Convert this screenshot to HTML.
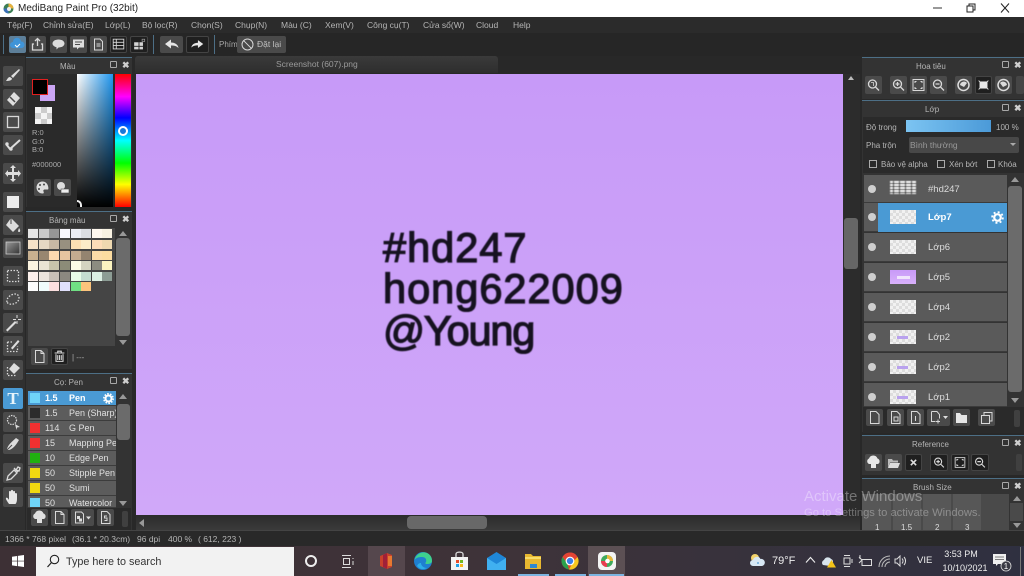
<!DOCTYPE html>
<html><head><meta charset="utf-8"><style>
*{box-sizing:border-box}
html,body{margin:0;padding:0;width:1024px;height:576px;overflow:hidden;background:#2a2a2a;font-family:"Liberation Sans",sans-serif}
.a,.t,.b,.bd,.s,.tl,.ln,.sw{position:absolute}
.t{white-space:nowrap;color:#c4c4c4;font-size:9px;line-height:11px}
.b{background:#4a4a4a;border-radius:2px}
.bd{background:#1f1f1f;border:1px solid #444;border-radius:2px}
.s{background:#333;border-top:1px solid #4d6f86}
.m{top:20px;font-size:8.5px;color:#b5b5b5}
.b svg,.bd svg{position:absolute;left:0;top:0;width:100%;height:100%}
.sw{width:12px;height:12px}
.ln{left:28px;width:88px;height:15px;background:#5c5c5c;border-bottom:1px solid #3c3c3c}
.ln i{position:absolute;left:2px;top:2px;width:10px;height:10px}
.ln span{position:absolute;left:17px;top:2px;font:normal 9px/11px "Liberation Sans",sans-serif;color:#e0e0e0;white-space:nowrap}
.ln b{position:absolute;left:41px;top:2px;font:normal 9px/11px "Liberation Sans",sans-serif;color:#e0e0e0;white-space:nowrap;width:47px;overflow:hidden}
.ly{position:absolute;left:864px;width:143px;height:29px;background:#5a5a5a;border-bottom:1px solid #3b3b3b}
.ly u{position:absolute;left:4px;top:10px;width:8px;height:8px;border-radius:50%;background:#cfcfcf}
.ly em{position:absolute;left:26px;top:7px;width:26px;height:14px;background:#f1f1f1;background-image:linear-gradient(45deg,#ddd 25%,transparent 25%,transparent 75%,#ddd 75%),linear-gradient(45deg,#ddd 25%,transparent 25%,transparent 75%,#ddd 75%);background-size:6px 6px;background-position:0 0,3px 3px}
.ly span{position:absolute;left:64px;top:9px;font-size:9.5px;line-height:11px;color:#dcdcdc;font-style:normal}
.ic{fill:none;stroke:#d8d8d8;stroke-width:1.3}
.pan{font-size:8px;color:#b5b5b5}
.x{position:absolute;color:#cfcfcf;font-size:9px;font-weight:bold;line-height:9px}
.pop{position:absolute;width:7px;height:7px;border:1px solid #a8a8a8;border-radius:1px}
.tb{position:absolute;top:546px;width:37px;height:30px}
.big{position:absolute;left:383px;font-size:41.5px;line-height:44px;color:#161220;-webkit-text-stroke:1.3px #161220;filter:blur(.55px);white-space:nowrap}
.cell{position:absolute;width:9.5px;height:9px}
</style></head><body>

<!-- Title bar -->
<div class="a" style="left:0;top:0;width:1024px;height:17px;background:#fff"></div>
<svg class="a" style="left:2px;top:2px" width="13" height="13" viewBox="0 0 13 13"><circle cx="6.5" cy="6.5" r="5" fill="#3c7f55"/><path d="M6.5 1.5a5 5 0 0 1 5 5h-5z" fill="#e8b23c"/><path d="M1.5 6.5a5 5 0 0 0 5 5v-5z" fill="#3a6fb8"/><circle cx="7" cy="7" r="2" fill="#eee"/></svg>
<div class="t" style="left:18px;top:3px;font-size:10px;color:#222;line-height:12px">MediBang Paint Pro (32bit)</div>
<svg class="a" style="left:930px;top:0" width="94" height="17" viewBox="0 0 94 17"><path d="M3 8h9" stroke="#333" fill="none"/><rect x="37" y="6" width="6" height="6" fill="none" stroke="#222"/><path d="M39 6V4h6v6h-2" fill="none" stroke="#222"/><path d="M71 3.500l8 9M79 3.500l-8 9" stroke="#222" fill="none"/></svg>

<!-- Menu -->
<div class="a" style="left:0;top:17px;width:1024px;height:16px;background:#2b2b2b"></div>
<div class="t m" style="left:7px">Tệp(F)</div>
<div class="t m" style="left:43px">Chỉnh sửa(E)</div>
<div class="t m" style="left:105px">Lớp(L)</div>
<div class="t m" style="left:142px">Bộ lọc(R)</div>
<div class="t m" style="left:191px">Chọn(S)</div>
<div class="t m" style="left:235px">Chụp(N)</div>
<div class="t m" style="left:281px">Màu (C)</div>
<div class="t m" style="left:325px">Xem(V)</div>
<div class="t m" style="left:367px">Công cụ(T)</div>
<div class="t m" style="left:423px">Cửa sổ(W)</div>
<div class="t m" style="left:476px">Cloud</div>
<div class="t m" style="left:513px">Help</div>

<!-- Toolbar -->
<div class="a" style="left:0;top:33px;width:1024px;height:23px;background:#262626"></div>
<div class="a" style="left:3px;top:35px;width:1px;height:19px;background:#4d6f86"></div>
<div class="b" style="left:9px;top:36px;width:17px;height:17px;background:#5d7f99"><svg viewBox="0 0 17 17"><path d="M4 12a3 3 0 0 1 0-6 4 4 0 0 1 8-.5A3.300 3.300 0 0 1 13 12z" fill="#3f94d8"/><path d="M6 9l2 2 3-3" stroke="#fff" fill="none"/></svg></div>
<div class="b" style="left:29px;top:36px;width:17px;height:17px"><svg viewBox="0 0 17 17" class="ic"><path d="M5 8H3.500v6h10V8H12M8.500 10V3M6 5l2.500-2.500L11 5"/></svg></div>
<div class="b" style="left:50px;top:36px;width:17px;height:17px"><svg viewBox="0 0 17 17"><path d="M8.500 3.500c3.500 0 6 1.800 6 4s-2.500 4-6 4l-2 2v-2.300c-2.400-.5-4-2-4-3.700 0-2.200 2.500-4 6-4z" fill="#dedede"/></svg></div>
<div class="b" style="left:70px;top:36px;width:17px;height:17px"><svg viewBox="0 0 17 17"><path d="M3 3.500h11v8H9l-2 2v-2H3z" fill="#dedede"/><path d="M5 6h7M5 8.500h5" stroke="#4a4a4a"/></svg></div>
<div class="b" style="left:90px;top:36px;width:17px;height:17px"><svg viewBox="0 0 17 17" class="ic" style="stroke-width:1"><path d="M4.500 3h5.500l2.500 2.500V14h-8zM6.500 8h4M6.500 10h4"/></svg></div>
<div class="bd" style="left:110px;top:36px;width:17px;height:17px"><svg viewBox="0 0 17 17" class="ic" style="stroke-width:1"><path d="M2.500 2.500h12v11h-12zM2.500 6h12M2.500 9.500h12M6 2.500v11"/></svg></div>
<div class="bd" style="left:130px;top:36px;width:18px;height:17px"><svg viewBox="0 0 17 17"><path d="M3 6h5v4H3zM9 6h4v4H9zM3 11h5v3H3zM9 11h4v3H9z" fill="#d4d4d4"/><path d="M12 2.500h3v2.500h-3z" fill="none" stroke="#aaa" stroke-width=".7"/></svg></div>
<div class="a" style="left:153px;top:35px;width:1px;height:19px;background:#4d6f86"></div>
<div class="b" style="left:160px;top:36px;width:23px;height:17px"><svg viewBox="0 0 23 17"><path d="M5 8l6-4.500V6.500c4 0 7 2 7.500 5.500-2-2-4-2.500-7.500-2.500v3z" fill="#e6e6e6"/></svg></div>
<div class="bd" style="left:186px;top:36px;width:23px;height:17px"><svg viewBox="0 0 23 17"><path d="M18 8l-6-4.500V6.500c-4 0-7 2-7.500 5.500 2-2 4-2.500 7.500-2.500v3z" fill="#e6e6e6"/></svg></div>
<div class="a" style="left:214px;top:35px;width:1px;height:19px;background:#4d6f86"></div>
<div class="t" style="left:219px;top:39px;font-size:8px;color:#a8a8a8">Phím</div>
<div class="b" style="left:237px;top:36px;width:49px;height:17px"><svg viewBox="0 0 49 17" class="ic" style="stroke-width:1"><circle cx="10.500" cy="8.500" r="5.500"/><path d="M6.700 4.700l7.600 7.600"/></svg></div>
<div class="t" style="left:257px;top:39px;font-size:8.5px;color:#c0c0c0">Đặt lại</div>

<!-- Background dark areas -->
<div class="a" style="left:0;top:56px;width:1024px;height:474px;background:#282828"></div>
<div class="a" style="left:0;top:56px;width:25px;height:474px;background:#303030"></div>

<!-- Canvas -->
<div class="a" style="left:135px;top:56px;width:363px;height:17px;background:linear-gradient(#3a3a3a,#2e2e2e);border-radius:3px 3px 0 0"></div>
<div class="t" style="left:276px;top:59px;font-size:8.500px;color:#9a9a9a">Screenshot (607).png</div>
<div class="a" style="left:136px;top:74px;width:707px;height:441px;background:linear-gradient(#c79af8,#d0a8f9)"></div>
<div class="big" style="top:226px;letter-spacing:1px">#hd247</div>
<div class="big" style="top:267px;letter-spacing:1px">hong622009</div>
<div class="big" style="top:309px;letter-spacing:-1.2px">@Young</div>

<!-- Canvas scrollbars -->
<div class="a" style="left:843px;top:74px;width:17px;height:441px;background:#2c2c2c"></div>
<div class="a" style="left:848px;top:76px;border-bottom:4px solid #bbb;border-left:3px solid transparent;border-right:3px solid transparent"></div>
<div class="a" style="left:844px;top:218px;width:14px;height:51px;background:#666;border-radius:3px"></div>
<div class="a" style="left:136px;top:515px;width:724px;height:15px;background:linear-gradient(#2b2b2b,#3a3a3a)"></div>
<div class="a" style="left:407px;top:516px;width:80px;height:13px;background:#686868;border-radius:4px"></div>
<div class="a" style="left:139px;top:519px;width:0;height:0;border-right:5px solid #999;border-top:4px solid transparent;border-bottom:4px solid transparent"></div>

<!-- Left tools -->
<div class="b" style="left:3px;top:66px;width:20px;height:20px"><svg viewBox="0 0 20 20"><path d="M16 3L8 10l2 2 7-8zM7 11c-2 0-2.500 2-4 4 3 0 6-.5 6-2.500z" fill="#ddd"/></svg></div>
<div class="b" style="left:3px;top:89px;width:20px;height:20px"><svg viewBox="0 0 20 20"><path d="M11 3l6 6-7 8-6-6z" fill="#ddd"/><path d="M7 8l5 5" stroke="#4a4a4a" stroke-width="1.500"/></svg></div>
<div class="b" style="left:3px;top:112px;width:20px;height:20px"><svg viewBox="0 0 20 20" class="ic"><rect x="4.500" y="4.500" width="11" height="11"/></svg></div>
<div class="b" style="left:3px;top:135px;width:20px;height:20px"><svg viewBox="0 0 20 20"><path d="M3 9l4 5 10-9" stroke="#ddd" stroke-width="2" fill="none"/><circle cx="4" cy="9" r="1.700" fill="#ddd"/><circle cx="8" cy="14" r="1.700" fill="#ddd"/></svg></div>
<div class="b" style="left:3px;top:163px;width:20px;height:21px"><svg viewBox="0 0 20 21"><path d="M10 2l3 3h-2v4h4V7l3 3.500L15 14v-2h-4v4h2l-3 3-3-3h2v-4H5v2L2 10.500 5 7v2h4V5H7z" fill="#ddd"/></svg></div>
<div class="b" style="left:3px;top:192px;width:20px;height:20px"><svg viewBox="0 0 20 20"><rect x="4" y="4" width="12" height="12" fill="#ececec"/></svg></div>
<div class="b" style="left:3px;top:215px;width:20px;height:20px"><svg viewBox="0 0 20 20"><path d="M8 3l8 8-6 6-7-7z" fill="#ddd"/><path d="M8 3v6" stroke="#4a4a4a"/><path d="M16 13c1 1.500 1.500 2.500 1 3.500s-2 .5-2-.5z" fill="#ddd"/></svg></div>
<div class="b" style="left:3px;top:238px;width:20px;height:20px"><svg viewBox="0 0 20 20"><defs><linearGradient id="g1" x2="1" y2="1"><stop offset="0" stop-color="#999"/><stop offset="1" stop-color="#333"/></linearGradient></defs><rect x="3" y="4" width="14" height="12" fill="url(#g1)" stroke="#ccc" stroke-width=".8"/></svg></div>
<div class="b" style="left:3px;top:266px;width:20px;height:20px"><svg viewBox="0 0 20 20" class="ic" style="stroke-dasharray:1.500 1.500"><rect x="4.500" y="4.500" width="11" height="11"/></svg></div>
<div class="b" style="left:3px;top:290px;width:20px;height:20px"><svg viewBox="0 0 20 20" class="ic" style="stroke-dasharray:1.500 1.500"><path d="M4 12c-1-4 4-8 8-8s5 4 3 7-9 5-11 1z"/></svg></div>
<div class="b" style="left:3px;top:313px;width:20px;height:20px"><svg viewBox="0 0 20 20"><path d="M3 17L12 8l1.500 1.500-9 9z" fill="#ddd"/><path d="M14 2v3M14 8v3M10 6.500h3M15 6.500h3" stroke="#ddd"/></svg></div>
<div class="b" style="left:3px;top:336px;width:20px;height:20px"><svg viewBox="0 0 20 20"><path d="M4.500 6h6M4.500 6v9.500h10v-5" class="ic" style="stroke-dasharray:1.500 1.500"/><path d="M8 12l7-8 1.500 1.500-7 8z" fill="#ddd"/></svg></div>
<div class="b" style="left:3px;top:360px;width:20px;height:20px"><svg viewBox="0 0 20 20"><path d="M4.500 7v8.500H14" class="ic" style="stroke-dasharray:1.500 1.500"/><path d="M11 3l6 5-6 6-5-5z" fill="#ddd"/></svg></div>
<div class="b" style="left:3px;top:388px;width:20px;height:21px;background:#4a9ad4"><div class="t" style="left:0;top:1px;width:20px;text-align:center;font:bold 17px/19px 'Liberation Serif',serif;color:#e8f4fb">T</div></div>
<div class="b" style="left:3px;top:412px;width:20px;height:20px"><svg viewBox="0 0 20 20" class="ic"><circle cx="9" cy="8" r="4.500" stroke-dasharray="1.500 1"/><path d="M12 12l5 3-3 .5-.5 2.500z" fill="#ddd" stroke="none"/></svg></div>
<div class="b" style="left:3px;top:434px;width:20px;height:20px"><svg viewBox="0 0 20 20"><path d="M4 16c0-3 2-6 9-12l3 2c-4 7-7 9-10 10z" fill="#ddd"/><path d="M4 16l5-5" stroke="#4a4a4a"/></svg></div>
<div class="b" style="left:3px;top:463px;width:20px;height:20px"><svg viewBox="0 0 20 20" class="ic"><path d="M4 17l1-4 6-6 3 3-6 6zM11 5l4 4M13 7l2-3 2 1-1 3z"/></svg></div>
<div class="b" style="left:3px;top:487px;width:20px;height:20px"><svg viewBox="0 0 20 20"><path d="M6 17c-2-3-3.500-5-3-6s2 0 3 2V5c0-1.500 2-1.500 2 0V4c0-1.500 2-1.500 2 0v1c0-1.500 2-1.500 2 0v2c0-1.500 2-1 2 0v5c0 2-.5 4-1.500 5z" fill="#e6e6e6"/></svg></div>

<!-- Color panel -->
<div class="s" style="left:26px;top:57px;width:106px;height:150px"></div>
<div class="t pan" style="left:60px;top:61px">Màu</div>
<div class="pop" style="left:110px;top:61px"></div><div class="x" style="left:122px;top:61px">✖</div>
<div class="a" style="left:27px;top:74px;width:104px;height:133px;background:#2a2a2a"></div>
<div class="a" style="left:40px;top:85px;width:15px;height:16px;background:#cba6f5"></div>
<div class="a" style="left:32px;top:79px;width:16px;height:16px;background:#000;border:1px solid #e02020"></div>
<div class="a" style="left:35px;top:107px;width:17px;height:17px;background:#f4f4f4;background-image:linear-gradient(45deg,#ccc 25%,transparent 25%,transparent 75%,#ccc 75%),linear-gradient(45deg,#ccc 25%,transparent 25%,transparent 75%,#ccc 75%);background-size:12px 12px;background-position:0 0,6px 6px"></div>
<div class="t" style="left:32px;top:129px;font-size:7.500px;line-height:8.500px;color:#aaa">R:0<br>G:0<br>B:0</div>
<div class="t" style="left:32px;top:159px;font-size:7.500px;color:#aaa">#000000</div>
<div class="b" style="left:34px;top:179px;width:17px;height:17px"><svg viewBox="0 0 17 17"><path d="M8.500 2.500a6 6 0 1 0 0 12c1.500 0 1.500-1 1-2s0-2 1.500-2H14c1 0 .5-8-5.500-8z" fill="#ddd"/><circle cx="6" cy="6" r="1" fill="#444"/><circle cx="10" cy="5.500" r="1" fill="#444"/><circle cx="5" cy="10" r="1" fill="#444"/></svg></div>
<div class="b" style="left:54px;top:179px;width:17px;height:17px"><svg viewBox="0 0 17 17"><circle cx="7" cy="7" r="4" fill="#ddd"/><rect x="7" y="10" width="8" height="4" fill="#eee" stroke="#444" stroke-width=".6"/></svg></div>
<div class="a" style="left:77px;top:74px;width:36px;height:133px;background:linear-gradient(rgba(0,0,0,0),#000),linear-gradient(90deg,#fff,#1f97f0)"></div>
<div class="a" style="left:115px;top:74px;width:16px;height:133px;background:linear-gradient(#f00,#f0f 17%,#00f 33%,#0ff 50%,#0f0 67%,#ff0 83%,#f00)"></div>
<div class="a" style="left:118px;top:126px;width:10px;height:10px;border-radius:50%;border:2px solid #fff;background:#1a78d8"></div>
<div class="a" style="left:77px;top:200px;width:5px;height:7px;border:2px solid #eee;border-width:2px 2px 0 0;border-radius:0 6px 0 0"></div>

<!-- Palette panel -->
<div class="s" style="left:26px;top:211px;width:106px;height:158px"></div>
<div class="t pan" style="left:49px;top:215px">Bảng màu</div>
<div class="pop" style="left:110px;top:215px"></div><div class="x" style="left:122px;top:215px">✖</div>
<div class="a" style="left:28px;top:228px;width:87px;height:118px;background:#454545"></div>
<div class="a" style="left:115px;top:228px;width:16px;height:118px;background:#333"></div>
<div class="a" style="left:116px;top:238px;width:14px;height:98px;background:#6b6b6b;border-radius:3px"></div>
<div class="a" style="left:119px;top:231px;border-bottom:5px solid #999;border-left:4px solid transparent;border-right:4px solid transparent"></div>
<div class="a" style="left:119px;top:340px;border-top:5px solid #999;border-left:4px solid transparent;border-right:4px solid transparent"></div>
<!-- swatches -->
<div class="cell" style="left:28px;top:229px;background:#e6e6e6"></div><div class="cell" style="left:39px;top:229px;background:#c9c9c9"></div><div class="cell" style="left:49px;top:229px;background:#969696"></div><div class="cell" style="left:60px;top:229px;background:#f8f8ff"></div><div class="cell" style="left:71px;top:229px;background:#eceef4"></div><div class="cell" style="left:81px;top:229px;background:#dcdee2"></div><div class="cell" style="left:92px;top:229px;background:#fff8ee"></div><div class="cell" style="left:102px;top:229px;background:#f8f2e2"></div>
<div class="cell" style="left:28px;top:240px;background:#f6e2c8"></div><div class="cell" style="left:39px;top:240px;background:#e6d8c4"></div><div class="cell" style="left:49px;top:240px;background:#c8b8a4"></div><div class="cell" style="left:60px;top:240px;background:#989080"></div><div class="cell" style="left:71px;top:240px;background:#fce0b4"></div><div class="cell" style="left:81px;top:240px;background:#fcecc8"></div><div class="cell" style="left:92px;top:240px;background:#fcdcb8"></div><div class="cell" style="left:102px;top:240px;background:#eed8b0"></div>
<div class="cell" style="left:28px;top:251px;background:#c8b090"></div><div class="cell" style="left:39px;top:251px;background:#988670"></div><div class="cell" style="left:49px;top:251px;background:#fcd8b0"></div><div class="cell" style="left:60px;top:251px;background:#e6c4a0"></div><div class="cell" style="left:71px;top:251px;background:#c4ac90"></div><div class="cell" style="left:81px;top:251px;background:#948470"></div><div class="cell" style="left:92px;top:251px;background:#fcdca8"></div><div class="cell" style="left:102px;top:251px;background:#fcdca0"></div>
<div class="cell" style="left:28px;top:261px;background:#fcf4e0"></div><div class="cell" style="left:39px;top:261px;background:#eae4d4"></div><div class="cell" style="left:49px;top:261px;background:#c8c4ac"></div><div class="cell" style="left:60px;top:261px;background:#8c8c78"></div><div class="cell" style="left:71px;top:261px;background:#fcfce8"></div><div class="cell" style="left:81px;top:261px;background:#d4d4c0"></div><div class="cell" style="left:92px;top:261px;background:#8c8c80"></div><div class="cell" style="left:102px;top:261px;background:#fcf4c0"></div>
<div class="cell" style="left:28px;top:272px;background:#fcf0ec"></div><div class="cell" style="left:39px;top:272px;background:#ece4dc"></div><div class="cell" style="left:49px;top:272px;background:#c8c0b8"></div><div class="cell" style="left:60px;top:272px;background:#8c8880"></div><div class="cell" style="left:71px;top:272px;background:#e8fce8"></div><div class="cell" style="left:81px;top:272px;background:#c4dcd0"></div><div class="cell" style="left:92px;top:272px;background:#dcf0e4"></div><div class="cell" style="left:102px;top:272px;background:#8c9c94"></div>
<div class="cell" style="left:28px;top:282px;background:#fcfcfc"></div><div class="cell" style="left:39px;top:282px;background:#f0fcfc"></div><div class="cell" style="left:49px;top:282px;background:#fce0e0"></div><div class="cell" style="left:60px;top:282px;background:#e0e0fc"></div><div class="cell" style="left:71px;top:282px;background:#70e084"></div><div class="cell" style="left:81px;top:282px;background:#fcc47c"></div>
<div class="b" style="left:31px;top:348px;width:17px;height:17px"><svg viewBox="0 0 17 17" class="ic" style="stroke-width:1"><path d="M4.500 2.500h5.500l3 3v9h-8.500zM10 2.500v3h3"/></svg></div>
<div class="bd" style="left:51px;top:348px;width:17px;height:17px"><svg viewBox="0 0 17 17" class="ic" style="stroke-width:1.200"><path d="M3 4.500h11M4.500 6v8h8V6M6.500 7v5.500M8.500 7v5.500M10.500 7v5.500M6.500 4V2.500h4V4"/></svg></div>
<div class="t" style="left:72px;top:352px;font-size:8px;color:#aaa">| ---</div>

<!-- Brush panel -->
<div class="s" style="left:26px;top:373px;width:106px;height:157px"></div>
<div class="t pan" style="left:54px;top:377px">Cọ: Pen</div>
<div class="pop" style="left:110px;top:377px"></div><div class="x" style="left:122px;top:377px">✖</div>
<div class="ln" style="top:391px;background:#4a9ad4"><i style="background:#6fd4f8"></i><span style="font-weight:bold;color:#fff">1.5</span><b style="font-weight:bold;color:#fff">Pen</b></div>
<svg class="a" style="left:103px;top:393px" width="11" height="11" viewBox="0 0 11 11"><circle cx="5.500" cy="5.500" r="3" fill="none" stroke="#fff" stroke-width="2"/><circle cx="5.500" cy="5.500" r="4.700" fill="none" stroke="#fff" stroke-width="1.500" stroke-dasharray="1.600 1.350"/></svg>
<div class="ln" style="top:406px"><i style="background:#2c2c2c"></i><span>1.5</span><b>Pen (Sharp)</b></div>
<div class="ln" style="top:421px"><i style="background:#f03030"></i><span>114</span><b>G Pen</b></div>
<div class="ln" style="top:436px"><i style="background:#f03030"></i><span>15</span><b>Mapping Pen</b></div>
<div class="ln" style="top:451px"><i style="background:#20b010"></i><span>10</span><b>Edge Pen</b></div>
<div class="ln" style="top:466px"><i style="background:#f0d810"></i><span>50</span><b>Stipple Pen</b></div>
<div class="ln" style="top:481px"><i style="background:#f0d810"></i><span>50</span><b>Sumi</b></div>
<div class="ln" style="top:496px;height:12px;overflow:hidden"><i style="background:#6fd4f8"></i><span>50</span><b>Watercolor</b></div>
<div class="a" style="left:116px;top:391px;width:15px;height:117px;background:#333"></div>
<div class="a" style="left:117px;top:404px;width:13px;height:36px;background:#6b6b6b;border-radius:3px"></div>
<div class="a" style="left:119px;top:394px;border-bottom:5px solid #999;border-left:4px solid transparent;border-right:4px solid transparent"></div>
<div class="a" style="left:119px;top:501px;border-top:5px solid #999;border-left:4px solid transparent;border-right:4px solid transparent"></div>
<div class="a" style="left:27px;top:508px;width:104px;height:22px;background:#2a2a2a"></div>
<div class="b" style="left:31px;top:509px;width:17px;height:17px"><svg viewBox="0 0 17 17"><path d="M4 10a3 3 0 0 1 0-5.500 4.500 4.500 0 0 1 8.500 0A3 3 0 0 1 13 10h-2v4H6v-4z" fill="#e0e0e0"/></svg></div>
<div class="b" style="left:51px;top:509px;width:17px;height:17px"><svg viewBox="0 0 17 17" class="ic" style="stroke-width:1"><path d="M4.500 2.500h5.500l3 3v9h-8.500zM10 2.500v3h3"/></svg></div>
<div class="b" style="left:71px;top:509px;width:23px;height:17px"><svg viewBox="0 0 23 17"><path d="M4.500 3h6l2 2v9h-8z" fill="none" stroke="#d8d8d8"/><rect x="6" y="7" width="3" height="3" fill="#ddd"/><rect x="8" y="9.500" width="3" height="3" fill="#ddd"/><path d="M15 7.500h5l-2.500 3z" fill="#ddd"/></svg></div>
<div class="b" style="left:97px;top:509px;width:17px;height:17px"><svg viewBox="0 0 17 17" class="ic" style="stroke-width:1"><path d="M4.500 2.500h5.500l3 3v9h-8.500zM10 7H7.500v2H10v2.500H7.500"/></svg></div>
<div class="a" style="left:122px;top:511px;width:6px;height:16px;background:#404040;border-radius:2px"></div>

<!-- Right: Navigator -->
<div class="s" style="left:862px;top:57px;width:162px;height:42px"></div>
<div class="t pan" style="left:916px;top:61px">Hoa tiêu</div>
<div class="pop" style="left:1002px;top:61px"></div><div class="x" style="left:1014px;top:61px">✖</div>
<div class="b" style="left:865px;top:76px;width:17px;height:18px"><svg viewBox="0 0 17 18" class="ic"><circle cx="7.500" cy="8" r="4"/><path d="M10.500 11l3.500 3.500"/><path d="M6 6.500h2.500v3.500" stroke-width=".8"/></svg></div>
<div class="b" style="left:890px;top:76px;width:17px;height:18px"><svg viewBox="0 0 17 18" class="ic"><circle cx="7.500" cy="8" r="4"/><path d="M10.500 11l3.500 3.500M5.500 8h4M7.500 6v4"/></svg></div>
<div class="b" style="left:910px;top:76px;width:17px;height:18px"><svg viewBox="0 0 17 18" class="ic" style="stroke-width:1"><rect x="3" y="3.500" width="11" height="11"/><path d="M5 7V5.500h1.500M12 7V5.500h-1.500M5 11v1.500h1.500M12 11v1.500h-1.500"/></svg></div>
<div class="b" style="left:930px;top:76px;width:17px;height:18px"><svg viewBox="0 0 17 18" class="ic"><circle cx="7.500" cy="8" r="4"/><path d="M10.500 11l3.500 3.500M5.500 8h4"/></svg></div>
<div class="b" style="left:955px;top:76px;width:17px;height:18px"><svg viewBox="0 0 17 18"><circle cx="8.500" cy="9" r="5.500" fill="none" stroke="#ddd" stroke-width="1.500"/><path d="M5 9a4 4 0 0 1 7-2l-3 4z" fill="#ddd"/></svg></div>
<div class="bd" style="left:975px;top:76px;width:17px;height:18px"><svg viewBox="0 0 17 18"><rect x="4" y="5" width="9" height="8" fill="#e8e8e8"/><path d="M3 4l2 2M14 4l-2 2M3 14l2-2M14 14l-2-2" stroke="#e8e8e8"/></svg></div>
<div class="b" style="left:995px;top:76px;width:17px;height:18px"><svg viewBox="0 0 17 18"><circle cx="8.500" cy="9" r="5.500" fill="none" stroke="#ddd" stroke-width="1.500"/><path d="M12 9a4 4 0 0 0-7-2l3 4z" fill="#ddd"/></svg></div>
<div class="a" style="left:1016px;top:76px;width:8px;height:18px;background:#454545;border-radius:2px"></div>

<!-- Right: Layer -->
<div class="s" style="left:862px;top:100px;width:162px;height:332px"></div>
<div class="t pan" style="left:925px;top:104px">Lớp</div>
<div class="pop" style="left:1002px;top:104px"></div><div class="x" style="left:1014px;top:104px">✖</div>
<div class="a" style="left:863px;top:117px;width:161px;height:56px;background:#2a2a2a"></div>
<div class="t pan" style="left:866px;top:122px">Độ trong</div>
<div class="a" style="left:906px;top:120px;width:85px;height:12px;background:linear-gradient(90deg,#7cc4f2,#4b9ad8)"></div>
<div class="t pan" style="left:996px;top:122px">100 %</div>
<div class="t pan" style="left:866px;top:140px">Pha trộn</div>
<div class="a" style="left:909px;top:137px;width:110px;height:16px;background:#484848;border-radius:2px"></div>
<div class="t" style="left:910px;top:140px;font-size:8.500px;color:#999">Bình thường</div>
<div class="a" style="left:1010px;top:143px;border-top:3px solid #aaa;border-left:3px solid transparent;border-right:3px solid transparent"></div>
<div class="a" style="left:869px;top:160px;width:8px;height:8px;border:1px solid #aaa"></div>
<div class="t pan" style="left:881px;top:159px">Bảo vệ alpha</div>
<div class="a" style="left:937px;top:160px;width:8px;height:8px;border:1px solid #aaa"></div>
<div class="t pan" style="left:949px;top:159px">Xén bớt</div>
<div class="a" style="left:987px;top:160px;width:8px;height:8px;border:1px solid #aaa"></div>
<div class="t pan" style="left:998px;top:159px">Khóa</div>

<div class="ly" style="top:175px;height:28px"><u></u><span>#hd247</span></div>
<div class="a" style="left:890px;top:181px;width:26px;height:13px;background:repeating-linear-gradient(90deg,#fff 0 3px,#666 3px 4px,#fff 4px 6px),repeating-linear-gradient(#fff 0 2px,#555 2px 3px);background-blend-mode:multiply;filter:blur(.4px)"></div>
<div class="ly" style="top:203px"><u></u><div class="a" style="left:14px;top:0;width:129px;height:29px;background:#4a9ad4"></div><em style="z-index:1"></em><span style="z-index:1;font-weight:bold;color:#fff">Lớp7</span></div>
<svg class="a" style="left:991px;top:211px" width="13" height="13" viewBox="0 0 13 13"><circle cx="6.500" cy="6.500" r="3.300" fill="none" stroke="#fff" stroke-width="2.200"/><circle cx="6.500" cy="6.500" r="5.400" fill="none" stroke="#fff" stroke-width="1.800" stroke-dasharray="2 2.240"/></svg>
<div class="ly" style="top:233px"><u></u><em></em><span>Lớp6</span></div>
<div class="ly" style="top:263px"><u></u><em style="background:linear-gradient(#c89af8,#d8b0fa)"></em><span>Lớp5</span></div>
<div class="a" style="left:897px;top:276px;width:13px;height:3px;background:#f0e4fc"></div>
<div class="ly" style="top:293px"><u></u><em></em><span>Lớp4</span></div>
<div class="ly" style="top:323px"><u></u><em></em><span>Lớp2</span></div>
<div class="a" style="left:897px;top:336px;width:11px;height:3px;background:#b9a2ee"></div>
<div class="ly" style="top:353px"><u></u><em></em><span>Lớp2</span></div>
<div class="a" style="left:897px;top:366px;width:11px;height:3px;background:#b9a2ee"></div>
<div class="ly" style="top:383px;height:24px;overflow:hidden"><u></u><em></em><span>Lớp1</span></div>
<div class="a" style="left:897px;top:396px;width:11px;height:3px;background:#b9a2ee"></div>
<div class="a" style="left:1007px;top:175px;width:17px;height:232px;background:#333"></div>
<div class="a" style="left:1008px;top:186px;width:14px;height:206px;background:#6b6b6b;border-radius:3px"></div>
<div class="a" style="left:1011px;top:177px;border-bottom:5px solid #999;border-left:4px solid transparent;border-right:4px solid transparent"></div>
<div class="a" style="left:1011px;top:398px;border-top:5px solid #999;border-left:4px solid transparent;border-right:4px solid transparent"></div>
<div class="a" style="left:863px;top:407px;width:161px;height:26px;background:#2a2a2a"></div>
<div class="b" style="left:866px;top:409px;width:17px;height:17px"><svg viewBox="0 0 17 17" class="ic" style="stroke-width:1"><path d="M4.500 2.500h5.500l3 3v9h-8.500z"/></svg></div>
<div class="b" style="left:887px;top:409px;width:17px;height:17px"><svg viewBox="0 0 17 17" class="ic" style="stroke-width:1"><path d="M4.500 2.500h5.500l3 3v9h-8.500zM7 8h4v4H7z"/></svg></div>
<div class="b" style="left:907px;top:409px;width:17px;height:17px"><svg viewBox="0 0 17 17" class="ic" style="stroke-width:1"><path d="M4.500 2.500h5.500l3 3v9h-8.500zM8.500 7v5"/></svg></div>
<div class="b" style="left:927px;top:409px;width:23px;height:17px"><svg viewBox="0 0 23 17"><path d="M4.500 2.500h5.500l2.500 3v4M4.500 2.500v10h4M9 12.500h4M11 10.500v4" fill="none" stroke="#d8d8d8"/><path d="M16 7h5l-2.500 3z" fill="#ddd"/></svg></div>
<div class="b" style="left:953px;top:409px;width:17px;height:17px"><svg viewBox="0 0 17 17"><path d="M3 4h4l1.500 2H14v8H3z" fill="#e6e6e6"/></svg></div>
<div class="b" style="left:978px;top:409px;width:17px;height:17px"><svg viewBox="0 0 17 17" class="ic" style="stroke-width:1"><path d="M3.500 6.500h8v8h-8zM6 6V3.500h8V12h-2.500"/></svg></div>
<div class="a" style="left:1014px;top:410px;width:6px;height:17px;background:#404040;border-radius:2px"></div>

<!-- Reference -->
<div class="s" style="left:862px;top:435px;width:162px;height:40px"></div>
<div class="t pan" style="left:912px;top:439px">Reference</div>
<div class="pop" style="left:1002px;top:439px"></div><div class="x" style="left:1014px;top:439px">✖</div>
<div class="b" style="left:865px;top:454px;width:17px;height:17px"><svg viewBox="0 0 17 17"><path d="M4 10a3 3 0 0 1 0-5.500 4.500 4.500 0 0 1 8.500 0A3 3 0 0 1 13 10h-2v4H6v-4z" fill="#e6e6e6"/></svg></div>
<div class="b" style="left:885px;top:454px;width:17px;height:17px"><svg viewBox="0 0 17 17"><path d="M3 5h4l1 1.500h5v2H5l-2 5z" fill="#bbb"/><path d="M5 9h10l-2 5H3z" fill="#ddd"/></svg></div>
<div class="bd" style="left:905px;top:454px;width:17px;height:17px"><svg viewBox="0 0 17 17"><path d="M5.500 5.500l6 6M11.500 5.500l-6 6" stroke="#ddd" stroke-width="1.800"/></svg></div>
<div class="bd" style="left:930px;top:454px;width:18px;height:17px"><svg viewBox="0 0 17 17" class="ic"><circle cx="7.500" cy="7.500" r="4"/><path d="M10.500 10.500l3.500 3.500M5.500 7.500h4M7.500 5.500v4"/></svg></div>
<div class="bd" style="left:951px;top:454px;width:18px;height:17px"><svg viewBox="0 0 17 17" class="ic" style="stroke-width:1"><rect x="3" y="3" width="11" height="11"/><path d="M5 6.500V5h1.500M12 6.500V5h-1.500M5 10.500V12h1.500M12 10.500V12h-1.500"/></svg></div>
<div class="bd" style="left:971px;top:454px;width:18px;height:17px"><svg viewBox="0 0 17 17" class="ic"><circle cx="7.500" cy="7.500" r="4"/><path d="M10.500 10.500l3.500 3.500M5.500 7.500h4"/></svg></div>
<div class="a" style="left:1016px;top:454px;width:6px;height:17px;background:#404040;border-radius:2px"></div>

<!-- Brush Size -->
<div class="s" style="left:862px;top:478px;width:162px;height:52px"></div>
<div class="t pan" style="left:913px;top:482px">Brush Size</div>
<div class="pop" style="left:1002px;top:482px"></div><div class="x" style="left:1014px;top:482px">✖</div>
<div class="a" style="left:862px;top:494px;width:147px;height:36px;background:#4a4a4a"></div>
<div class="a" style="left:862px;top:494px;width:29px;height:36px;background:#575757"></div>
<div class="a" style="left:893px;top:494px;width:28px;height:36px;background:#575757"></div>
<div class="a" style="left:923px;top:494px;width:28px;height:36px;background:#575757"></div>
<div class="a" style="left:953px;top:494px;width:28px;height:36px;background:#575757"></div>
<div class="t" style="left:875px;top:522px;font-size:8px;color:#ddd">1</div>
<div class="t" style="left:901px;top:522px;font-size:8px;color:#ddd">1.5</div>
<div class="t" style="left:935px;top:522px;font-size:8px;color:#ddd">2</div>
<div class="t" style="left:965px;top:522px;font-size:8px;color:#ddd">3</div>
<div class="a" style="left:1010px;top:494px;width:14px;height:36px;background:#333"></div>
<div class="a" style="left:1010px;top:503px;width:13px;height:18px;background:#4a4a4a"></div>
<div class="a" style="left:1013px;top:496px;border-bottom:5px solid #999;border-left:4px solid transparent;border-right:4px solid transparent"></div>
<div class="a" style="left:1013px;top:523px;border-top:5px solid #999;border-left:4px solid transparent;border-right:4px solid transparent"></div>

<!-- Activate Windows -->
<div class="t" style="left:804px;top:488px;font-size:15px;line-height:17px;color:rgba(255,255,255,.34)">Activate Windows</div>
<div class="t" style="left:804px;top:507px;font-size:11.2px;line-height:13px;color:rgba(255,255,255,.32)">Go to Settings to activate Windows.</div>

<!-- Status bar -->
<div class="a" style="left:0;top:530px;width:1024px;height:16px;background:#292929;border-top:1px solid #444"></div>
<div class="t" style="left:5px;top:534px;font-size:8.5px;color:#b5b5b5">1366 * 768 pixel</div>
<div class="t" style="left:72px;top:534px;font-size:8.5px;color:#b5b5b5">(36.1 * 20.3cm)</div>
<div class="t" style="left:137px;top:534px;font-size:8.5px;color:#b5b5b5">96 dpi</div>
<div class="t" style="left:168px;top:534px;font-size:8.5px;color:#b5b5b5">400 %</div>
<div class="t" style="left:198px;top:534px;font-size:8.5px;color:#b5b5b5">( 612, 223 )</div>

<!-- Taskbar -->
<div class="a" style="left:0;top:546px;width:1024px;height:30px;background:linear-gradient(90deg,#3d3035,#3e3339 50%,#2f3040)"></div>
<svg class="a" style="left:12px;top:555px" width="12" height="12" viewBox="0 0 12 12"><path d="M0 1.700l5-.7v4.700H0zM5.800.9L12 0v5.700H5.800zM0 6.400h5v4.700l-5-.7zM5.800 6.400H12V12l-6.200-.9z" fill="#fff"/></svg>
<div class="a" style="left:36px;top:547px;width:258px;height:29px;background:#f2f2f2"></div>
<svg class="a" style="left:46px;top:554px" width="14" height="14" viewBox="0 0 14 14"><circle cx="8.500" cy="5.500" r="4.200" fill="none" stroke="#222" stroke-width="1.100"/><path d="M5.500 8.500L1.500 13" stroke="#222" stroke-width="1.200"/></svg>
<div class="t" style="left:66px;top:555px;font-size:10.8px;line-height:14px;color:#333">Type here to search</div>
<div class="a" style="left:305px;top:555px;width:12px;height:12px;border:2px solid #eee;border-radius:50%"></div>
<svg class="a" style="left:341px;top:555px" width="14" height="13" viewBox="0 0 14 13"><path d="M1 .5h9M1 12.500h9M2.500 3.500h6v6h-6zM12 3v1M12 6v4" stroke="#ddd" fill="none"/></svg>
<div class="tb" style="left:368px;background:#55474d"></div>
<svg class="a" style="left:378px;top:552px" width="16" height="18" viewBox="0 0 16 18"><path d="M9 1l5 2v12l-5 2-7-3V4z" fill="#c8402c"/><path d="M9 1v16l-4-2V3z" fill="#a02038"/><path d="M10 4h4v10h-4z" fill="#e87830"/></svg>
<svg class="a" style="left:413px;top:551px" width="20" height="20" viewBox="0 0 20 20"><circle cx="10" cy="10" r="9" fill="#1f7fd0"/><path d="M1.500 9C3 3 9 0 14 2c4 2 5 5 5 8 0 2-2 3-5 3-2 0-2-1-1-2 1-3-1-5-4-5-4 0-6 1-7.500 3z" fill="#3ed08e"/><path d="M8 12c0 3 3 5 6 5-4 2-8 1-10-2 1-2 2-3 4-3z" fill="#2dade8"/></svg>
<svg class="a" style="left:450px;top:551px" width="19" height="20" viewBox="0 0 19 20"><path d="M1 6h17v13H1z" fill="#f4f4f4"/><path d="M6 6V3c0-2.500 7-2.500 7 0v3" fill="none" stroke="#ddd" stroke-width="1.300"/><rect x="6" y="9" width="3" height="3" fill="#e84c2a"/><rect x="10" y="9" width="3" height="3" fill="#70b820"/><rect x="6" y="13" width="3" height="3" fill="#1fa0e8"/><rect x="10" y="13" width="3" height="3" fill="#f8b818"/></svg>
<svg class="a" style="left:487px;top:552px" width="19" height="18" viewBox="0 0 19 18"><path d="M0 6l9.500-6L19 6v12H0z" fill="#1f87d8"/><path d="M0 6l9.500 6L19 6v12H0z" fill="#40b0f0"/></svg>
<svg class="a" style="left:524px;top:553px" width="18" height="17" viewBox="0 0 18 17"><path d="M1 1h6l2 2h8v13H1z" fill="#e8b830"/><path d="M1 4h16v2H1z" fill="#f8dc68"/><rect x="6" y="11" width="7" height="4" fill="#2e88d0"/></svg>
<div class="a" style="left:518px;top:574px;width:31px;height:2px;background:#7cb4e0"></div>
<svg class="a" style="left:561px;top:552px" width="18" height="18" viewBox="0 0 18 18"><circle cx="9" cy="9" r="8.500" fill="#e24434"/><path d="M9 .5a8.500 8.500 0 0 1 7.500 4.500H9z" fill="#e24434"/><path d="M16.500 5A8.500 8.500 0 0 1 8 17.500L12 10z" fill="#f8c820"/><path d="M1.500 5L6 11l2 6.500A8.500 8.500 0 0 1 1.500 5z" fill="#2aa14c"/><circle cx="9" cy="9" r="3.800" fill="#3a80e8" stroke="#fff" stroke-width="1.200"/></svg>
<div class="a" style="left:555px;top:574px;width:31px;height:2px;background:#7cb4e0"></div>
<div class="tb" style="left:588px;background:#5c5054"></div>
<div class="a" style="left:598px;top:552px;width:18px;height:18px;background:#f4f4f4;border-radius:4px"></div>
<svg class="a" style="left:600px;top:554px" width="14" height="14" viewBox="0 0 14 14"><circle cx="7" cy="7" r="6" fill="#3faa5c"/><path d="M7 1a6 6 0 0 1 6 6H7z" fill="#e8b83c"/><path d="M1 7a6 6 0 0 0 6 6V7z" fill="#e83c50"/><circle cx="7.500" cy="7" r="2.300" fill="#fff"/></svg>
<div class="a" style="left:589px;top:574px;width:35px;height:2px;background:#7cb4e0"></div>

<svg class="a" style="left:749px;top:553px" width="17" height="15" viewBox="0 0 17 15"><circle cx="6" cy="5" r="4" fill="#f3d36b"/><path d="M4 13a3 3 0 0 1 0-6 4 4 0 0 1 7.500-1A3.500 3.500 0 0 1 13 13z" fill="#d8e8f4"/><circle cx="9" cy="10" r="1" fill="#6aa8d8"/></svg>
<div class="t" style="left:772px;top:555px;font-size:11px;line-height:13px;color:#eee">79°F</div>
<svg class="a" style="left:805px;top:556px" width="11" height="8" viewBox="0 0 11 8"><path d="M1 6.500l4.500-5 4.500 5" stroke="#eee" fill="none" stroke-width="1.100"/></svg>
<svg class="a" style="left:821px;top:554px" width="16" height="14" viewBox="0 0 16 14"><path d="M2 11a3 3 0 0 1 1-5 4 4 0 0 1 7-1 3 3 0 0 1 2 3l-3 4z" fill="#d8e4ec"/><path d="M10.500 6l4.500 7.500H6z" fill="#f3c318"/></svg>
<svg class="a" style="left:841px;top:554px" width="13" height="14" viewBox="0 0 13 14"><path d="M3 1.500h6M3 12.500h6M3 4h6v6H3zM11 5v4" stroke="#ddd" fill="none"/></svg>
<svg class="a" style="left:858px;top:555px" width="14" height="12" viewBox="0 0 14 12"><path d="M4 4.500h9.500v6H4zM1 2l3 3-3 3M2 0v4" stroke="#ddd" fill="none"/></svg>
<svg class="a" style="left:878px;top:555px" width="13" height="13" viewBox="0 0 13 13"><path d="M1 12a11 11 0 0 1 11-11M4 12a8 8 0 0 1 8-8M7 12a5 5 0 0 1 5-5" stroke="#bbb" fill="none"/></svg>
<svg class="a" style="left:894px;top:555px" width="13" height="12" viewBox="0 0 13 12"><path d="M1 4h2l3-3v10L3 8H1zM8 3.500a3.500 3.500 0 0 1 0 5M10 2a6 6 0 0 1 0 8" stroke="#ddd" fill="none"/></svg>
<div class="t" style="left:917px;top:555px;font-size:9.500px;line-height:12px;color:#eee">VIE</div>
<div class="t" style="left:936px;top:548px;width:50px;text-align:center;font-size:9px;line-height:12px;color:#eee">3:53 PM</div>
<div class="t" style="left:935px;top:562px;width:60px;text-align:center;font-size:9px;line-height:12px;color:#eee">10/10/2021</div>
<svg class="a" style="left:992px;top:553px" width="22" height="20" viewBox="0 0 22 20"><path d="M1 1h13v10H6l-2 2v-2H1z" fill="#f0f0f0"/><path d="M3 4h9M3 6.500h9" stroke="#555" stroke-width=".8"/><circle cx="14" cy="13" r="5" fill="#3a3a44" stroke="#ddd" stroke-width=".8"/></svg>
<div class="t" style="left:1001px;top:561px;width:10px;text-align:center;font-size:8px;color:#fff">1</div>
<div class="a" style="left:1020px;top:547px;width:1px;height:29px;background:#777"></div>

</body></html>
